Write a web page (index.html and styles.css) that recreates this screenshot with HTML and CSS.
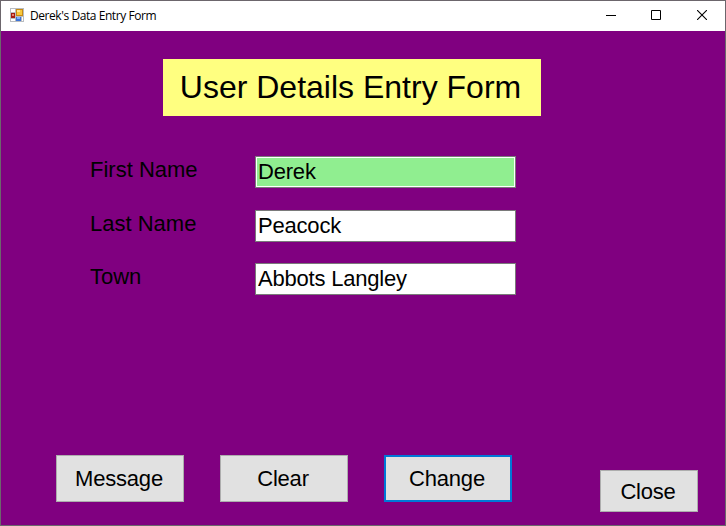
FILE: index.html
```html
<!DOCTYPE html>
<html lang="en">
<head>
<meta charset="utf-8">
<title>Derek's Data Entry Form</title>
<link rel="stylesheet" href="styles.css">
</head>
<body>
<div class="window">
  <header class="titlebar">
    <svg class="app-icon" width="14" height="14" viewBox="0 0 14 14" shape-rendering="crispEdges">
      <rect width="14" height="14" fill="#b9bcc0"/>
      <rect x="1" y="1" width="4" height="3" fill="#fff"/>
      <rect x="1" y="11" width="4" height="2" fill="#fff"/>
      <rect x="12" y="9" width="1" height="4" fill="#fff"/>
      <rect x="6" y="1" width="7" height="7" fill="#c88a12"/>
      <rect x="7" y="2" width="5" height="5" fill="#f8c83c"/>
      <rect x="7" y="2" width="3" height="2" fill="#ffe48c"/>
      <rect x="1" y="5" width="4" height="5" fill="#a51c12"/>
      <rect x="2" y="6" width="2" height="2" fill="#e88070"/>
      <rect x="6" y="9" width="5" height="4" fill="#3c72d8"/>
      <rect x="7" y="9" width="3" height="2" fill="#80b0f8"/>
    </svg>
    <span class="caption">Derek's Data Entry Form</span>
    <div class="controls">
      <svg width="10" height="10" viewBox="0 0 10 10"><path d="M0 5.5H10" stroke="#000" fill="none"/></svg>
      <svg width="10" height="10" viewBox="0 0 10 10"><path d="M.5 .5H9.5V9.5H.5Z" stroke="#000" fill="none"/></svg>
      <svg class="x" width="10" height="10" viewBox="0 0 10 10"><path d="M0 0L10 10M10 0L0 10" stroke="#000" stroke-width="1.1" fill="none"/></svg>
    </div>
  </header>
  <main class="form">
    <h1 class="heading">User Details Entry Form</h1>
    <div class="fields">
      <label for="first">First Name</label>
      <input id="first" class="active" type="text" value="Derek">
      <label for="last">Last Name</label>
      <input id="last" type="text" value="Peacock">
      <label for="town">Town</label>
      <input id="town" type="text" value="Abbots Langley">
    </div>
    <div class="actions">
      <button>Message</button>
      <button>Clear</button>
      <button class="default">Change</button>
      <button class="close">Close</button>
    </div>
  </main>
</div>
</body>
</html>
```
FILE: styles.css
```css
* { box-sizing: border-box; }
body { margin: 0; font-family: "Liberation Sans", Arial, sans-serif; color: #000; }
.window {
  width: 726px;
  height: 526px;
  border: 1px solid #6c666c;
  background: #800080;
  display: flex;
  flex-direction: column;
}
.titlebar {
  height: 30px;
  background: #fff;
  display: flex;
  align-items: center;
  padding: 0 18px 0 9px;
}
.app-icon { margin-top: -2px; }
.caption {
  margin-left: 6px;
  font: 12px/16px "Open Sans", "Noto Sans", sans-serif;
  letter-spacing: -0.43px;
  white-space: nowrap;
}
.controls { margin: -2px 0 0 auto; display: flex; gap: 35px; }
.controls svg { display: block; }
.controls .x { margin-left: 1px; }
.form { flex: 1; display: flex; flex-direction: column; padding: 28px 27px 13px 55px; }
.heading {
  width: 378px;
  height: 57px;
  margin: 0 0 0 107px;
  padding-right: 3px;
  background: #ffff80;
  font-size: 32px;
  line-height: 57px;
  font-weight: normal;
  text-align: center;
  white-space: nowrap;
}
.fields {
  display: grid;
  grid-template-columns: 165px 261px;
  grid-template-rows: 54px 53px 32px;
  margin: 40px 0 0 34px;
  font-size: 22px;
}
.fields label { line-height: 28px; }
.fields input {
  width: 261px;
  height: 32px;
  border: 1px solid #7a7a7a;
  border-radius: 0;
  padding: 0 2px;
  background: #fff;
  color: #000;
  font: inherit;
  letter-spacing: -0.2px;
}
.fields .active { background: #90ee90; box-shadow: inset 0 0 0 1px #fff; }
.actions { margin-top: auto; display: flex; gap: 36px; height: 57px; }
.actions button {
  width: 128px;
  height: 47px;
  border: 1px solid #adadad;
  border-radius: 0;
  padding: 0 2px 0 0;
  background: #e1e1e1;
  color: #000;
  font: 22px "Liberation Sans", Arial, sans-serif;
  letter-spacing: -0.2px;
}
.actions .default { border: 2px solid #0078d7; }
.actions .close { width: 98px; height: 42px; margin: auto 0 0 auto; padding: 2px 2px 0 0; }
```
